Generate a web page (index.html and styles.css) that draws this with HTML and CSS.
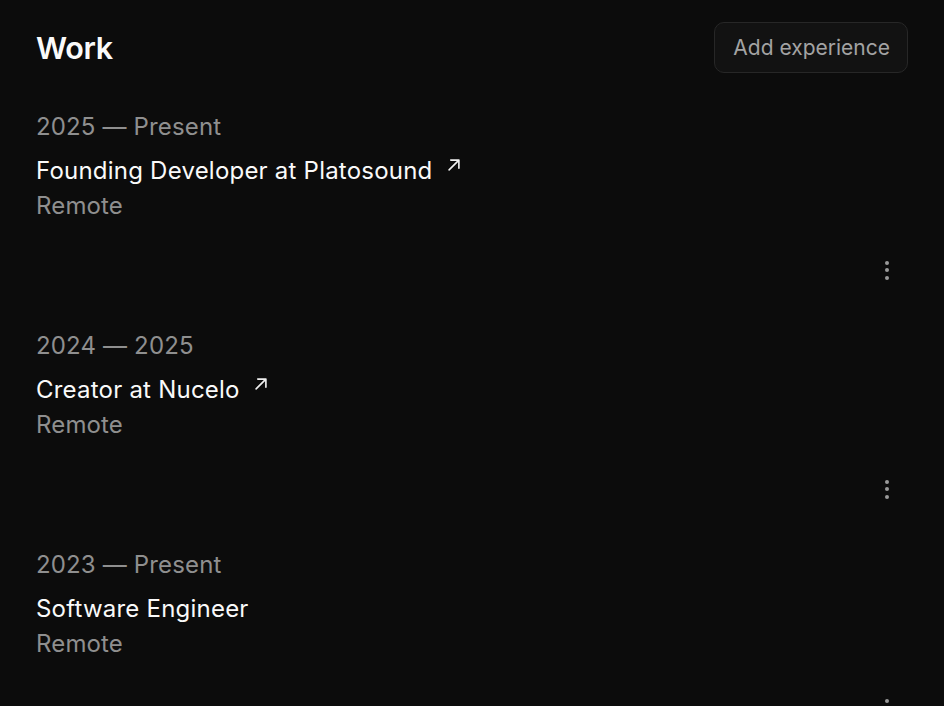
FILE: index.html
```html
<!DOCTYPE html>
<html lang="en">
<head>
<meta charset="utf-8">
<link rel="stylesheet" href="styles.css">
</head>
<body>
<main class="page">
  <header class="header">
    <h1 class="title">Work</h1>
    <button class="add-btn">Add experience</button>
  </header>
  <ul class="list">
    <li class="item">
      <div class="date">2025 — Present</div>
      <div class="role">Founding Developer at Platosound
        <svg class="ext" viewBox="0 0 12 12" width="14" height="14"><path d="M1.8 10.2L10.2 1.8M3.2 1.8H10.2V8.8" fill="none" stroke="currentColor" stroke-width="1.4" stroke-linecap="round" stroke-linejoin="round"/></svg>
      </div>
      <div class="loc">Remote</div>
      <div class="actions"><button class="kebab" aria-label="More"><span></span><span></span><span></span></button></div>
    </li>
    <li class="item">
      <div class="date">2024 — 2025</div>
      <div class="role">Creator at Nucelo
        <svg class="ext" viewBox="0 0 12 12" width="14" height="14"><path d="M1.8 10.2L10.2 1.8M3.2 1.8H10.2V8.8" fill="none" stroke="currentColor" stroke-width="1.4" stroke-linecap="round" stroke-linejoin="round"/></svg>
      </div>
      <div class="loc">Remote</div>
      <div class="actions"><button class="kebab" aria-label="More"><span></span><span></span><span></span></button></div>
    </li>
    <li class="item">
      <div class="date">2023 — Present</div>
      <div class="role">Software Engineer</div>
      <div class="loc">Remote</div>
      <div class="actions"><button class="kebab" aria-label="More"><span></span><span></span><span></span></button></div>
    </li>
  </ul>
</main>
</body>
</html>
```
FILE: styles.css
```css
html, body {
  margin: 0;
  background: #0c0c0c;
}
body {
  font-family: Inter, "Noto Sans", sans-serif;
  color: #fafafa;
  overflow: hidden;
  height: 706px;
}
.page {
  padding: 22px 36px 0 36px;
}
.header {
  display: flex;
  justify-content: space-between;
  align-items: center;
  height: 51px;
}
.title {
  margin: 0;
  font-size: 30.5px;
  font-weight: 600;
  letter-spacing: -0.3px;
}
.add-btn {
  height: 51px;
  padding: 0 17px 0 18px;
  background: #121212;
  border: 1px solid #272727;
  border-radius: 10px;
  color: #a3a3a3;
  font-family: inherit;
  font-size: 21px;
}
.list {
  list-style: none;
  margin: 36px 0 0 0;
  padding: 0;
}
.item {
  display: flex;
  flex-direction: column;
  margin-bottom: 38px;
}
.date, .loc {
  color: #8f8f8f;
  font-size: 24px;
  line-height: 35px;
  letter-spacing: 0.15px;
}
.role {
  margin-top: 9px;
  font-size: 24px;
  line-height: 35px;
  letter-spacing: 0.22px;
  color: #fafafa;
  display: flex;
  align-items: flex-start;
}
.ext {
  margin-left: 14px;
  margin-top: 5px;
  color: #f0f0f0;
}
.actions {
  display: flex;
  justify-content: flex-end;
  margin-top: 27px;
  height: 40px;
}
.kebab {
  width: 40px;
  height: 40px;
  margin-right: 1px;
  background: transparent;
  border: 0;
  padding: 0;
  display: flex;
  flex-direction: column;
  align-items: center;
  justify-content: center;
  gap: 3.5px;
}
.kebab span {
  width: 4px;
  height: 4px;
  border-radius: 50%;
  background: #9a9a9a;
}
```
